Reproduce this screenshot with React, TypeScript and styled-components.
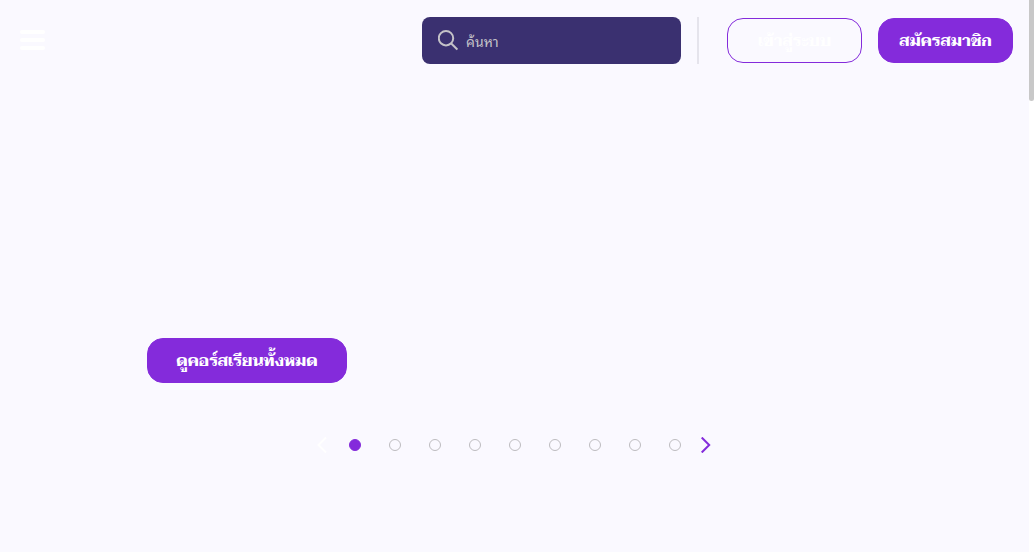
import React, { useState } from "react";
import styled, { createGlobalStyle } from "styled-components";

const PURPLE = "#842bdb";

const GlobalStyle = createGlobalStyle`
  * { box-sizing: border-box; }
  body {
    margin: 0;
    background: #faf9ff;
    font-family: Taviraj, "Noto Serif Thai", "Liberation Serif", serif;
    font-size: 16px;
  }
  button { font-family: inherit; }
`;

const Shell = styled.div`
  display: flex;
  min-height: 100vh;
`;

const Page = styled.div`
  flex: 1;
  min-width: 0;
`;

const ScrollTrack = styled.div`
  width: 5px;
  height: 100vh;
  background: #ffffff;
`;

const ScrollThumb = styled.div`
  height: 101px;
  border-radius: 0 0 3px 3px;
  background: #c8c8c8;
`;

const Header = styled.header`
  display: flex;
  align-items: center;
  justify-content: space-between;
  padding: 17px 16px 0 16px;
`;

const Tools = styled.div`
  display: flex;
  align-items: center;
  gap: 16px;
`;

const IconButton = styled.button<{ $tone: string }>`
  display: flex;
  align-items: center;
  justify-content: center;
  padding: 4px;
  border: 0;
  background: transparent;
  color: ${(p) => p.$tone};
  cursor: pointer;
`;

const SearchBox = styled.label`
  display: flex;
  align-items: center;
  gap: 8px;
  width: 259px;
  height: 47px;
  padding: 0 16px;
  border-radius: 8px;
  background: #3a3070;
  color: #c4c2c8;
`;

const SearchInput = styled.input`
  flex: 1;
  min-width: 0;
  padding: 0;
  border: 0;
  outline: 0;
  background: transparent;
  color: #ffffff;
  font-family: "Noto Sans Thai Looped", "Liberation Sans", sans-serif;
  font-size: 14px;
  line-height: 24px;
  &::placeholder { color: #c4c2c8; opacity: 1; }
`;

const Divider = styled.div`
  width: 2px;
  height: 47px;
  margin-right: 12px;
  background: #e5e4ec;
`;

const PillButton = styled.button<{ $outline?: boolean; $wide?: boolean }>`
  width: ${(p) => (p.$wide ? 200 : 135)}px;
  height: 45px;
  padding: 0;
  border: 1px solid ${PURPLE};
  border-radius: 16px;
  background: ${(p) => (p.$outline ? "transparent" : PURPLE)};
  color: #ffffff;
  font-size: 16px;
  font-weight: 700;
  line-height: 24px;
  white-space: nowrap;
  cursor: pointer;
`;

const Hero = styled.main`
  display: flex;
  padding: 274px 147px 0;
`;

const Pager = styled.nav`
  display: flex;
  align-items: center;
  justify-content: center;
  margin-top: 48px;
`;

const DotButton = styled.button`
  display: flex;
  align-items: center;
  justify-content: center;
  width: 40px;
  height: 28px;
  padding: 0;
  border: 0;
  background: transparent;
  cursor: pointer;
`;

const Dot = styled.span<{ $active: boolean }>`
  width: 12px;
  height: 12px;
  border: 1px solid ${(p) => (p.$active ? PURPLE : "#bdbcbf")};
  border-radius: 50%;
  background: ${(p) => (p.$active ? PURPLE : "transparent")};
`;

const Arrow = styled(IconButton)`
  width: 24px;
  height: 28px;
`;

const slides = Array.from({ length: 9 }, (_, i) => i);

export default function App() {
  const [active, setActive] = useState(0);
  const last = slides.length - 1;
  return (
    <Shell>
      <GlobalStyle />
      <Page>
        <Header>
          <IconButton $tone="#ffffff" aria-label="เมนู">
            <svg width="25" height="21" viewBox="0 0 25 21" fill="currentColor">
              <rect width="25" height="4" rx="2" />
              <rect y="8" width="25" height="4" rx="2" />
              <rect y="16" width="25" height="4" rx="2" />
            </svg>
          </IconButton>
          <Tools>
            <SearchBox>
              <svg width="20" height="22" viewBox="0 0 20 22" fill="none" stroke="currentColor" strokeWidth="2">
                <circle cx="8" cy="8.2" r="7.2" />
                <path d="M13 13.2l6.4 6.4" />
              </svg>
              <SearchInput type="search" placeholder="ค้นหา" aria-label="ค้นหา" />
            </SearchBox>
            <Divider />
            <PillButton $outline>เข้าสู่ระบบ</PillButton>
            <PillButton>สมัครสมาชิก</PillButton>
          </Tools>
        </Header>
        <Hero>
          <PillButton $wide>ดูคอร์สเรียนทั้งหมด</PillButton>
        </Hero>
        <Pager aria-label="สไลด์">
          <Arrow
            $tone={active === 0 ? "#ffffff" : PURPLE}
            aria-label="ก่อนหน้า"
            onClick={() => setActive(Math.max(0, active - 1))}
          >
            <svg width="12" height="16" viewBox="0 0 12 16" fill="none" stroke="currentColor" strokeWidth="2">
              <path d="M9 0.5L1.5 8L9 15.5" />
            </svg>
          </Arrow>
          {slides.map((i) => (
            <DotButton key={i} aria-label={`สไลด์ ${i + 1}`} onClick={() => setActive(i)}>
              <Dot $active={i === active} />
            </DotButton>
          ))}
          <Arrow
            $tone={active === last ? "#ffffff" : PURPLE}
            aria-label="ถัดไป"
            onClick={() => setActive(Math.min(last, active + 1))}
          >
            <svg width="12" height="16" viewBox="0 0 12 16" fill="none" stroke="currentColor" strokeWidth="2">
              <path d="M0.7 0.5L8.2 8L0.7 15.5" />
            </svg>
          </Arrow>
        </Pager>
      </Page>
      <ScrollTrack>
        <ScrollThumb />
      </ScrollTrack>
    </Shell>
  );
}
